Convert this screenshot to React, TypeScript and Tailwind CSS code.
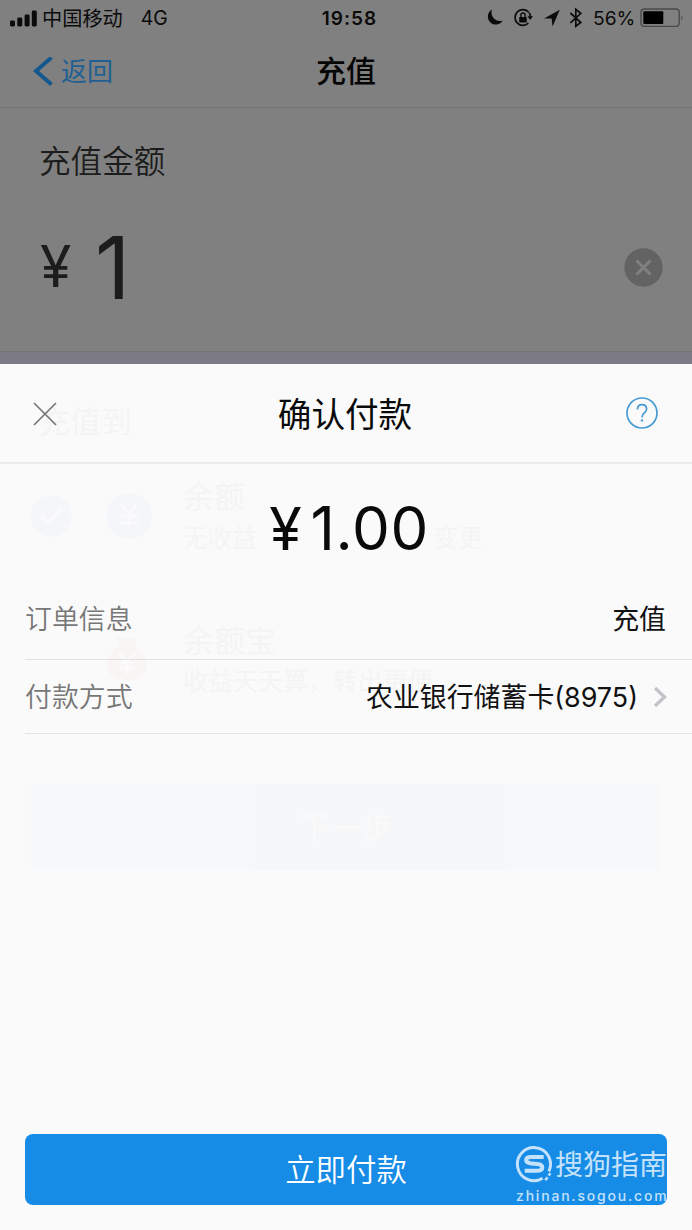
import React from "react";

function StatusIcons() {
  return (
    <svg width="200" height="26" viewBox="484 4 200 26" className="block" fill="none" stroke="#0b0b0b">
      <path d="M492.8 8.6 A8 8 0 1 0 503.6 19.6 A8.6 8.6 0 0 1 492.8 8.6Z" fill="#0b0b0b" stroke="none" transform="translate(-0.8 0)" />
      <path d="M529.6 11.2 A7.9 7.9 0 1 0 529.2 22.2" strokeWidth="1.7" transform="translate(-0.8 0)" />
      <path d="M529.2 11.6 A8 8 0 0 1 530.4 16" strokeWidth="1.7" />
      <path d="M527.4 15.2 H533 L530.2 19Z" fill="#0b0b0b" stroke="none" />
      <rect x="519.2" y="16" width="7.6" height="5.6" rx=".8" fill="#0b0b0b" stroke="none" />
      <path d="M520.9 16.5 V14.1 a2.1 2.1 0 0 1 4.2 0 V16.5" strokeWidth="1.4" />
      <path d="M559.8 8.8 L544 17.4 L551.6 17.5 L552.6 25.4Z" fill="#0b0b0b" stroke="none" />
      <path d="M570.4 12 L580.8 21.5 L575.8 25.3 V8.3 L580.8 12.3 L570.4 21.8" strokeWidth="1.7" />
      <rect x="641" y="8" width="38.2" height="17.4" rx="3.4" stroke="#4a4a4a" strokeWidth="1.4" />
      <rect x="643.3" y="10.3" width="20" height="12.8" rx="1" fill="#000" stroke="none" />
      <path d="M681.4 14 Q683.6 16.7 681.4 19.4Z" fill="#4a4a4a" stroke="none" />
    </svg>
  );
}

function StatusBar() {
  return (
    <div className="grid h-9 grid-cols-3 text-[#0b0b0b]">
      <div className="flex items-center pl-[10px]">
        <svg width="27" height="17" viewBox="0 0 27 17" fill="#0b0b0b">
          <rect x="0" y="10.4" width="5" height="6" rx="1.4" />
          <rect x="7.3" y="7.6" width="5" height="8.8" rx="1.4" />
          <rect x="14.6" y="4.5" width="5" height="11.9" rx="1.4" />
          <rect x="21.8" y="0.6" width="5" height="15.8" rx="1.4" />
        </svg>
        <span className="ml-[5px] pt-[2px] text-[20.2px] leading-none">中国移动</span>
        <span className="ml-[18px] pt-[2px] text-[19.4px] leading-none">4G</span>
      </div>
      <div className="flex items-center justify-center pl-[7px] text-[19px] font-semibold leading-none tracking-[1px]">19:58</div>
      <div className="flex items-center justify-end pr-2">
        <div className="grid">
          <div className="col-start-1 row-start-1"><StatusIcons /></div>
          <span className="col-start-1 row-start-1 self-center pt-[2px] pl-[109px] text-[19.2px] leading-none">56%</span>
        </div>
      </div>
    </div>
  );
}

function RechargePage() {
  return (
    <div className="flex h-[364px] flex-col bg-[#808080]">
      <StatusBar />
      <div className="grid h-[72px] grid-cols-3 border-b border-[#747474]">
        <div className="flex items-center pl-[33px] text-[#205f92]">
          <svg width="20" height="30" viewBox="0 0 20 30" fill="none" stroke="#15588e" strokeWidth="4">
            <path d="M18.5 0.5 L3 14 L18.5 27.5" />
          </svg>
          <span className="ml-2 text-[26px] leading-none">返回</span>
        </div>
        <div className="flex items-center justify-center pb-[2px] text-[30px] font-medium leading-none text-[#050505]">充值</div>
      </div>
      <div className="flex flex-1 flex-col px-[39px]">
        <div className="mt-[38px] text-[31.6px] font-[350] leading-[32px] text-[#1c1c1c]">充值金额</div>
        <div className="mt-[39px] flex h-[101px] items-center text-[#1c1c1c]">
          <span className="w-[55px] pb-[2px] pl-px text-[57px] leading-none">¥</span>
          <span className="pl-px text-[87px] leading-none">1</span>
          <svg className="-mr-[10px] ml-auto" width="39" height="39" viewBox="0 0 39 39">
            <circle cx="19.5" cy="19.5" r="19.2" fill="#636363" />
            <path d="M12.5 12.5 L26.5 26.5 M26.5 12.5 L12.5 26.5" stroke="#808080" strokeWidth="3" />
          </svg>
        </div>
      </div>
      <div className="h-[13px] border-t border-[#747474] bg-[#7c7a84]" />
    </div>
  );
}

function Ghost() {
  return (
    <div className="pointer-events-none absolute inset-x-0 top-0 flex flex-col opacity-[0.02]">
      <div className="mt-[42px] pl-[39px] text-[31px] leading-[32px]">充值到</div>
      <div className="mt-[42px] flex h-[72px] items-center pl-[31px]">
        <svg width="122" height="48" viewBox="0 0 122 48" fill="none" stroke="white" strokeWidth="4">
          <circle cx="20" cy="24" r="20.5" fill="#0070e0" stroke="none" />
          <path d="M10 24 L17 31 L31 17" />
          <circle cx="98" cy="24" r="23" fill="#0070e0" stroke="none" />
          <path d="M90 12 L98 22 L106 12 M98 22 V38 M89 24 H107 M89 31 H107" strokeWidth="3" />
        </svg>
        <div className="ml-[30px] flex flex-col gap-[12px]">
          <span className="text-[31px] leading-[32px]">余额</span>
          <div className="flex w-[300px] justify-between text-[24.5px] leading-[26px]">
            <span>无收益</span>
            <span>变更</span>
          </div>
        </div>
      </div>
      <div className="mt-[71px] flex h-[72px] items-center pl-[106px]">
        <svg width="42" height="52" viewBox="0 0 42 52" fill="#f04000">
          <path d="M10 5 H32 L28 13 Q42 22 41 34 Q38 47 21 47 Q4 47 1 34 Q0 22 14 13Z" />
          <path d="M13 20 L21 29 L29 20 M21 29 V41 M13 30 H29 M13 35 H29" fill="none" stroke="white" strokeWidth="3" />
        </svg>
        <div className="ml-[35px] flex flex-col gap-[11px]">
          <span className="text-[31px] leading-[32px]">余额宝</span>
          <span className="text-[25px] leading-[26px]">收益天天算，转出更便</span>
        </div>
      </div>
      <div className="mx-[31px] mt-[89px] flex h-[86px] items-center justify-center bg-[#5080c0] pt-[3px] text-[31px] text-white">下一步</div>
    </div>
  );
}

function Watermark() {
  return (
    <div className="absolute right-[25px] bottom-[26px] w-[152px] text-[#c4e2fb]">
      <div className="flex h-[38px] items-center">
        <svg width="38" height="38" viewBox="0 0 38 38" fill="none" stroke="#c4e2fb">
          <path d="M34.8 26.5 A17 17 0 1 0 28.4 33.6" strokeWidth="3" />
          <path d="M36.3 28.3 L34.6 31 M33.6 32.8 L31 35.6" strokeWidth="2.6" />
          <path d="M29.5 11.8 H16.5 Q11.5 11.8 11.5 15 Q11.5 18 16.5 18.4 L23 19 Q28 19.5 28 22.5 Q28 26 22.5 26 H10" strokeWidth="4.2" />
        </svg>
        <span className="ml-[3px] pt-[2px] text-[28px] leading-none whitespace-nowrap">搜狗指南</span>
      </div>
      <div className="mt-[5px] pl-px text-[14px] font-medium leading-[16px] tracking-[1.8px] whitespace-nowrap">zhinan.sogou.com</div>
    </div>
  );
}

function PaymentSheet() {
  return (
    <div className="relative flex flex-1 flex-col bg-[#fafafa]">
      <Ghost />
      <div className="flex h-[100px] items-center border-b-2 border-[#ebebeb] px-[33px] pt-[2px]">
        <svg width="24" height="24" viewBox="0 0 24 24" stroke="#777" strokeWidth="1.7">
          <path d="M1 1 L23 23 M23 1 L1 23" />
        </svg>
        <span className="flex-1 pt-px pl-[7px] text-center text-[33.6px] leading-none text-[#0a0a0a]">确认付款</span>
        <svg className="mr-px mb-[2px]" width="32" height="32" viewBox="0 0 32 32" fill="none" stroke="#459ad2" strokeWidth="1.7">
          <circle cx="16" cy="16" r="15" />
          <path d="M11.4 12.4 Q11.4 7.6 16 7.6 Q20.6 7.6 20.6 12 Q20.6 14.2 18.3 16 Q16 17.6 16 20.4" />
          <circle cx="16" cy="23.4" r="1.2" fill="#459ad2" stroke="none" />
        </svg>
      </div>
      <div className="flex h-[116px] items-center justify-center pt-[11px] pl-[6px] text-[60px] leading-none text-[#0a0a0a]">
        <span className="pt-px text-[59px]">¥</span><span className="ml-[9px] tracking-[0.6px]">1.00</span>
      </div>
      <div className="ml-[25px] flex h-[80px] items-center justify-between border-b border-[#e4e4e4] pr-[26px] text-[26.9px] leading-none">
        <span className="font-[350] text-[#777]">订单信息</span>
        <span className="text-[#111]">充值</span>
      </div>
      <div className="ml-[25px] flex h-[74px] items-center border-b border-[#e4e4e4] pr-[25px] text-[26.9px] leading-none">
        <span className="pt-[2px] font-[350] text-[#777]">付款方式</span>
        <span className="ml-auto pt-[2px] text-[#111]">农业银行储蓄卡(8975)</span>
        <svg className="ml-[15px]" width="14" height="20" viewBox="0 0 14 20" fill="none" stroke="#c4c4c8" strokeWidth="3.4">
          <path d="M2 1 L11.5 10 L2 19" />
        </svg>
      </div>
      <div className="mx-[25px] mt-auto mb-[25px] flex h-[71px] items-center justify-center rounded-lg bg-[#178ce6] pt-[2px] text-[30.4px] font-[350] leading-none text-white">立即付款</div>
      <Watermark />
    </div>
  );
}

export default function App() {
  return (
    <main className="flex h-[1230px] w-[692px] flex-col overflow-hidden font-['Inter','Noto_Sans_CJK_SC',sans-serif]">
      <RechargePage />
      <PaymentSheet />
    </main>
  );
}
